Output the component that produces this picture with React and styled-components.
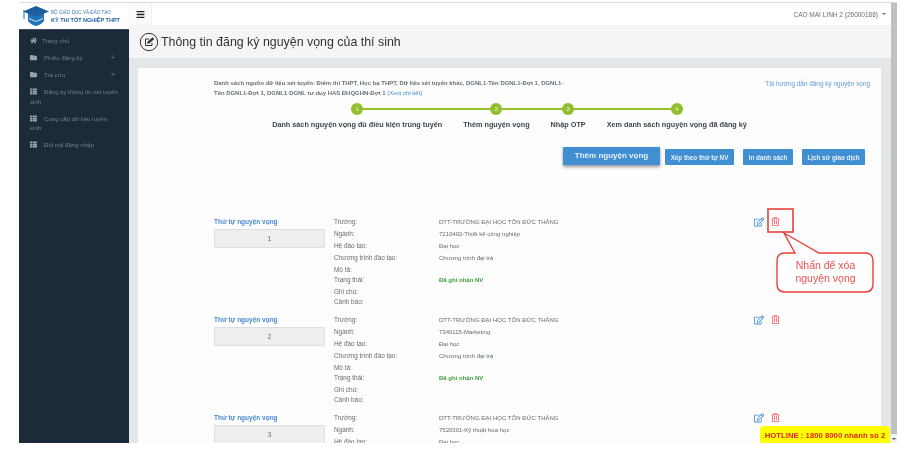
import React from "react";
import styled, { createGlobalStyle } from "styled-components";
import { FaHome, FaFolder, FaThList, FaBars, FaRegTrashAlt, FaRegEdit } from "react-icons/fa";

const Global = createGlobalStyle`
  html, body { margin: 0; padding: 0; background: #fff; overflow: hidden; }
  body { font-family: "Liberation Sans", Arial, sans-serif; }
  * { box-sizing: border-box; }
`;

const Page = styled.div`
  width: 901px; height: 457px; padding: 2px 4px 14px 19px; background: #fff; overflow: hidden;
`;
const Frame = styled.div`
  position: relative; display: flex; height: 441px; border-top: 1px solid #dcdcdc; overflow: hidden; filter: blur(0.4px);
`;
const Side = styled.aside`
  width: 110px; flex: none; display: flex; flex-direction: column; background: #1c2b3a;
`;
const Brand = styled.div`
  height: 27px; flex: none; background: #fff; display: flex; align-items: center; gap: 2px; padding: 0 0 0 4px;
  border-bottom: 1px solid #3a4a58;
`;
const BrandText = styled.div`
  display: flex; flex-direction: column; gap: 1px; color: #2a6db3; line-height: 7px;
`;
const BrandSmall = styled.span` font-size: 4.6px; color: #3d7dbc; white-space: nowrap; `;
const BrandBig = styled.span` font-size: 5.5px; font-weight: 700; color: #1f5fa8; white-space: nowrap; `;
const Nav = styled.nav` display: flex; flex-direction: column; padding-top: 3px; `;
const NavItem = styled.div`
  position: relative; padding: 3px 4px 0 11px; height: ${p => p.$tall ? 26.5 : 17}px; font-size: 6.1px; line-height: 9.5px; color: #727e8a;
  svg { margin-right: ${p => p.$gap || 7}px; vertical-align: -1px; color: #98a2ac; }
`;
const Plus = styled.span` position: absolute; right: 14px; top: 3px; font-size: 7px; `;

const Main = styled.div` flex: 1; min-width: 0; display: flex; flex-direction: column; background: #e4e7ea; `;
const Top = styled.header`
  height: 22px; flex: none; background: #fff; display: flex; align-items: center; justify-content: space-between; padding-right: 5px;
`;
const Burger = styled.div`
  width: 23px; height: 22px; background: #fafafa; border-right: 1px solid #f0f0f0; display: flex; align-items: center; justify-content: center; color: #222;
`;
const User = styled.div` font-size: 6.5px; color: #66707a; display: flex; align-items: center; gap: 4px; `;
const Caret = styled.span` width: 0; height: 0; border: 2px solid transparent; border-top-color: #66707a; margin-top: 2px; `;
const TitleBar = styled.div`
  height: 33px; flex: none; background: #f5f5f5; display: flex; align-items: center; gap: 2px; padding-left: 10px;
`;
const Title = styled.h1` margin: 0; font-size: 12.4px; font-weight: 400; color: #333; white-space: nowrap; `;
const Content = styled.div` flex: 1; min-height: 0; padding: 10px 10px 0 9px; overflow: hidden; `;
const Card = styled.section` background: #fdfdfd; height: 400px; padding: 11px 11px 0 76px; overflow: hidden; `;

const NoteRow = styled.div` display: flex; justify-content: space-between; gap: 10px; `;
const Note = styled.p`
  margin: 0; width: 352px; flex: none; font-size: 5.95px; line-height: 9.5px; font-weight: 700; color: #66707a;
  a { color: #3f8ad0; font-weight: 400; }
`;
const GuideLink = styled.a` font-size: 6.4px; line-height: 9.5px; color: #5f9bd6; white-space: nowrap; `;

const Stepper = styled.div`
  position: relative; display: flex; justify-content: center; gap: 21px; margin: 5px -11px 0 -76px;
`;
const Line = styled.div` position: absolute; left: 219px; width: 319px; top: 5px; height: 2px; background: #96c12f; `;
const Step = styled.div` position: relative; display: flex; flex-direction: column; align-items: center; gap: 5px; `;
const Dot = styled.span`
  width: 12px; height: 12px; border-radius: 50%; background: #8fbf2c; color: #dce9b6; font-size: 6px; font-weight: 700;
  display: flex; align-items: center; justify-content: center;
`;
const StepLabel = styled.span` font-size: 7.25px; line-height: 10px; font-weight: 700; color: #3c4650; white-space: nowrap; `;

const Actions = styled.div` display: flex; align-items: flex-end; justify-content: flex-end; gap: 9px; margin: 17px 5px 0 0; height: 18px; `;
const Primary = styled.button`
  width: 97px; height: 18px; margin-right: -4px; border: 0; padding: 0 0 2px; background: #3f8fd2; color: #e7f1fa; font: 700 8px "Liberation Sans", sans-serif;
  box-shadow: 0 2px 3px rgba(0,0,0,.4);
`;
const Btn = styled.button`
  width: ${p => p.$w}px; height: 16px; border: 0; border-radius: 1px; padding: 0; background: #3f8fd2; color: #e7f1fa; font: 700 6.3px "Liberation Sans", sans-serif;
`;

const List = styled.div` display: flex; flex-direction: column; margin-top: 52px; `;
const Row = styled.article` display: grid; grid-template-columns: 120px 105px 315px 1fr; height: 98px; `;
const Order = styled.div` display: flex; flex-direction: column; gap: 3px; `;
const OrderLabel = styled.span` font-size: 6.5px; line-height: 9px; font-weight: 700; color: #4a8ad0; `;
const OrderBox = styled.div`
  width: 111px; height: 19px; background: #eeeeee; border: 1px solid #dedede; border-radius: 1px; font-size: 6.4px; color: #666; display: flex; align-items: center; justify-content: center;
`;
const Cells = styled.div` display: flex; flex-direction: column; padding-top: ${p => p.$value ? 1 : 0}px; `;
const Cell = styled.div`
  height: ${p => p.$h || 12}px; line-height: 9px; font-size: ${p => p.$value ? 6 : 6.4}px; color: ${p => p.$green ? "#3fa23f" : "#626c75"}; font-weight: ${p => p.$green ? 700 : 400}; white-space: nowrap;
`;
const Tools = styled.div` display: flex; gap: 7px; align-items: flex-start; `;

const Annotation = styled.div` position: absolute; left: 748px; top: 205px; width: 112px; height: 90px; `;
const Bubble = styled.div`
  position: absolute; left: 10px; top: 51px; width: 97px; text-align: center; font-size: 10.5px; line-height: 12.5px; color: #ee5050; white-space: nowrap;
`;

const Hotline = styled.div`
  position: absolute; right: 7px; top: 423px; width: 130px; height: 18px; background: #ffff00; border-radius: 4px 4px 0 0;
  color: #e0261c; font-size: 7.75px; font-weight: 700; display: flex; align-items: center; justify-content: center; white-space: nowrap;
`;
const Scroll = styled.div`
  width: 6px; flex: none; background: #c1c1c1; position: relative;
`;
const ScrollEnd = styled.div`
  position: absolute; left: 0; right: 0; bottom: 0; height: 9px; background: #f1f1f1;
  &::after { content: ""; position: absolute; left: 1px; top: 4px; border: 2px solid transparent; border-top-color: #555; }
`;

const Cap = () => (
  <svg width="26" height="20" viewBox="0 0 26 20">
    <path d="M1 4v9" stroke="#1f6fb5" strokeWidth="1" />
    <path d="M5 7 13 10.500 21 7v8q-3 4-8 5-5-1-8-5z" fill="#1f74ba" />
    <path d="M0 5.500 13 0 26 5.500 13 11z" fill="#1d5e9e" />
    <path d="M6 12.500 13 15.500 20 12.500" stroke="#fff" strokeWidth=".8" fill="none" />
  </svg>
);

const PenCircle = () => (
  <svg width="20" height="20" viewBox="0 0 20 20" fill="none" stroke="#333">
    <circle cx="10" cy="10" r="8.700" strokeWidth="1" />
    <path d="M13 11v2.500H6.500V7H10" strokeWidth="1" />
    <path d="M8.500 11.500 9 9.500 13.500 5.500 15 7l-4.500 4z" fill="#333" strokeWidth=".5" />
  </svg>
);

const data = [
  ["1", "7210402-Thiết kế công nghiệp"],
  ["2", "7340115-Marketing"],
  ["3", "7520301-Kỹ thuật hóa học"],
];
const labels = [["Trường:", 12], ["Ngành:", 12], ["Hệ đào tạo:", 12], ["Chương trình đào tạo:", 12], ["Mô tả:", 10], ["Trạng thái:", 12], ["Ghi chú:", 10], ["Cảnh báo:", 10]];

export default function App() {
  return (
    <Page>
      <Global />
      <Frame>
        <Side>
          <Brand>
            <Cap />
            <BrandText>
              <BrandSmall>BỘ GIÁO DỤC VÀ ĐÀO TẠO</BrandSmall>
              <BrandBig>KỲ THI TỐT NGHIỆP THPT</BrandBig>
            </BrandText>
          </Brand>
          <Nav>
            <NavItem $gap={5}><FaHome size={7} />Trang chủ</NavItem>
            <NavItem><FaFolder size={7} />Phiếu đăng ký<Plus>+</Plus></NavItem>
            <NavItem><FaFolder size={7} />Tra cứu<Plus>+</Plus></NavItem>
            <NavItem $tall><FaThList size={7} />Đăng ký thông tin xét tuyển<br />sinh</NavItem>
            <NavItem $tall><FaThList size={7} />Cung cấp dữ liệu tuyển<br />sinh</NavItem>
            <NavItem><FaThList size={7} />Đổi mã đăng nhập</NavItem>
          </Nav>
        </Side>
        <Main>
          <Top>
            <Burger><FaBars size={9} /></Burger>
            <User>CAO MAI LINH 2 (26000188)<Caret /></User>
          </Top>
          <TitleBar>
            <PenCircle />
            <Title>Thông tin đăng ký nguyện vọng của thí sinh</Title>
          </TitleBar>
          <Content>
            <Card>
              <NoteRow>
                <Note>
                  Danh sách nguồn dữ liệu xét tuyển: Điểm thi THPT, Học bạ THPT, Dữ liệu xét tuyển khác, DGNL1-Tên DGNL1-Đợt 1, DGNL1-Tên DGNL1-Đợt 1, DGNL1-DGNL tư duy HAS ĐHQGHN-Đợt 1 <a>(Xem chi tiết)</a>
                </Note>
                <GuideLink>Tải hướng dẫn đăng ký nguyện vọng</GuideLink>
              </NoteRow>
              <Stepper>
                <Line />
                <Step><Dot>1</Dot><StepLabel>Danh sách nguyện vọng đủ điều kiện trúng tuyển</StepLabel></Step>
                <Step><Dot>2</Dot><StepLabel>Thêm nguyện vọng</StepLabel></Step>
                <Step><Dot>3</Dot><StepLabel>Nhập OTP</StepLabel></Step>
                <Step><Dot>4</Dot><StepLabel>Xem danh sách nguyện vọng đã đăng ký</StepLabel></Step>
              </Stepper>
              <Actions>
                <Primary>Thêm nguyện vọng</Primary>
                <Btn $w={69}>Xếp theo thứ tự NV</Btn>
                <Btn $w={50}>In danh sách</Btn>
                <Btn $w={63}>Lịch sử giao dịch</Btn>
              </Actions>
              <List>
                {data.map(([n, major]) => {
                  const vals = ["DTT-TRƯỜNG ĐẠI HỌC TÔN ĐỨC THẮNG", major, "Đại học", "Chương trình đại trà", "", "Đã ghi nhận NV", "", ""];
                  return (
                    <Row key={n}>
                      <Order>
                        <OrderLabel>Thứ tự nguyện vọng</OrderLabel>
                        <OrderBox>{n}</OrderBox>
                      </Order>
                      <Cells>{labels.map(([l, h]) => <Cell key={l} $h={h}>{l}</Cell>)}</Cells>
                      <Cells $value>{vals.map((v, i) => <Cell key={i} $value $h={labels[i][1]} $green={i === 5}>{v}</Cell>)}</Cells>
                      <Tools>
                        <FaRegEdit size={10} color="#4a90d0" />
                        <FaRegTrashAlt size={9} color="#f2606a" />
                      </Tools>
                    </Row>
                  );
                })}
              </List>
            </Card>
          </Content>
        </Main>
        <Scroll><ScrollEnd /></Scroll>
        <Annotation>
          <svg width="112" height="90" viewBox="0 0 112 90" fill="none">
            <rect x="1" y="1" width="25" height="23" stroke="#e8413c" strokeWidth="1.600" />
            <path d="M17 25 L52 45 H98 Q106 45 106 53 V76 Q106 84 98 84 H18 Q10 84 10 76 V53 Q10 45 18 45 H28 Z" fill="#fff" stroke="#e8413c" strokeWidth="1.400" />
          </svg>
          <Bubble>Nhấn để xóa<br />nguyện vọng</Bubble>
        </Annotation>
        <Hotline>HOTLINE : 1800 8000 nhánh số 2</Hotline>
      </Frame>
    </Page>
  );
}
